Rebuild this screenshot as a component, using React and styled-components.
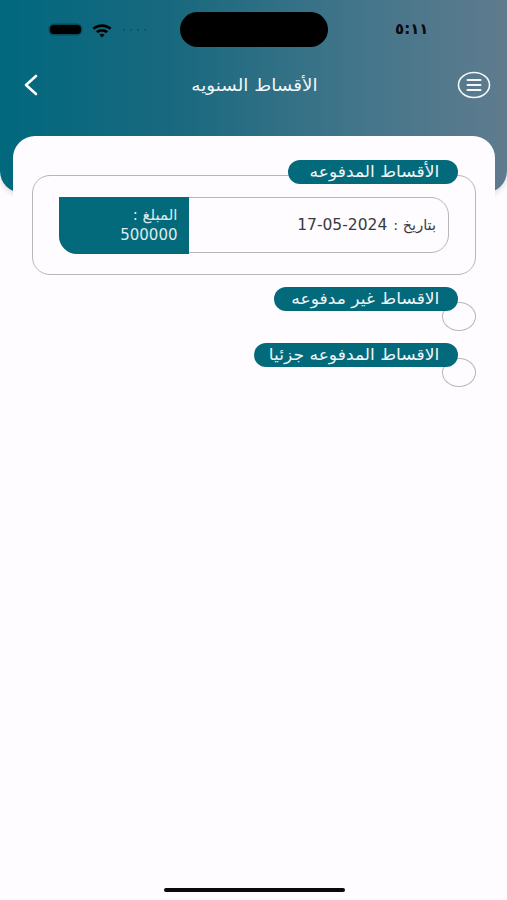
import React from 'react'
import styled, { createGlobalStyle } from 'styled-components'

const teal = '#036a7c'

const GlobalStyle = createGlobalStyle`
    html, body {
        margin: 0;
        padding: 0;
        background-color: #fefcfe;
    }
    body {
        font-family: "DejaVu Sans", "Noto Sans", sans-serif;
    }
`
const Screen = styled.div`
    width: 507px;
    height: 900px;
    overflow: hidden;
    display: flex;
    flex-direction: column;
    position: relative;
    background-color: #fefcfe;
`
const Header = styled.header`
    height: 193px;
    flex-shrink: 0;
    box-sizing: border-box;
    padding-top: 12px;
    background: linear-gradient(90deg, #01687e 0%, #19697f 35%, #42758a 70%, #5f7b8e 100%);
    border-radius: 0 0 22px 22px;
    box-shadow: 0 3px 5px rgba(0, 0, 0, 0.12);
`
const StatusBar = styled.div`
    height: 35px;
    display: grid;
    grid-template-columns: 1fr 148px 1fr;
    align-items: center;
`
const Time = styled.div`
    color: #0a0a12;
    font-size: 15px;
    font-weight: bold;
    text-align: center;
    padding-right: 11px;
    padding-bottom: 1px;
`
const Island = styled.div`
    height: 35px;
    background-color: #000;
    border-radius: 18px;
`
const StatusIcons = styled.div`
    display: flex;
    align-items: center;
    gap: 10px;
    padding-left: 50px;
    direction: ltr;
`
const Battery = styled.div`
    width: 31px;
    height: 9px;
    background-color: #000;
    border-radius: 4px;
    box-shadow: 0 0 0 1.5px rgba(0, 40, 50, 0.45);
`
const Dots = styled.div`
    display: flex;
    gap: 5px;
`
const Dot = styled.span`
    width: 2px;
    height: 2px;
    border-radius: 50%;
    background-color: rgba(10, 50, 60, 0.45);
`
const NavBar = styled.nav`
    height: 30px;
    margin-top: 23px;
    padding: 0 16px 0 22px;
    display: flex;
    align-items: center;
    justify-content: space-between;
`
const NavTitle = styled.h1`
    margin: 0;
    color: #f2f6f8;
    font-size: 17px;
    font-weight: normal;
    transform: translateX(6px) scaleX(1.08);
`
const IconButton = styled.div`
    display: flex;
    align-items: center;
    justify-content: center;
`
const Card = styled.main`
    margin: -57px 12px 0 13px;
    padding: 24px 19px 0 19px;
    height: 700px;
    background-color: #fefcfe;
    border-radius: 22px 22px 0 0;
    display: flex;
    flex-direction: column;
    gap: 12px;
    position: relative;
`
const Section = styled.section`
    position: relative;
    padding-top: 15px;
`
const SectionBox = styled.div`
    box-sizing: border-box;
    border: 1.5px solid #b7b6bb;
    background-color: #fefcfe;
    ${({ $empty }) => $empty
        ? `
        width: 34px;
        height: 29px;
        border-radius: 50%;
        `
        : `
        padding: 21px 26px;
        border-radius: 18px;
        `}
`
const Pill = styled.div`
    position: absolute;
    top: 0;
    right: 18px;
    width: ${({ $width }) => $width}px;
    height: 24px;
    box-sizing: border-box;
    padding: 0 19px 2px 0;
    display: flex;
    align-items: center;
    white-space: nowrap;
    color: #eef5f6;
    font-size: 16px;
    background-color: ${teal};
    border-radius: 12px;
`
const PillText = styled.span`
    display: inline-block;
    transform-origin: right center;
    transform: scaleX(1.07);
`
const Row = styled.div`
    height: 56px;
    box-sizing: border-box;
    border: 1.5px solid #b7b6bb;
    border-radius: 18px;
    display: flex;
    justify-content: space-between;
`
const RowDate = styled.div`
    padding-right: 12px;
    display: flex;
    align-items: center;
    gap: 6px;
    color: #3a3a3d;
    font-size: 14.5px;
`
const DateValue = styled.bdi`
    font-size: 15.5px;
`
const Amount = styled.div`
    width: 130px;
    box-sizing: border-box;
    padding: 8px 11px 0 0;
    margin: -1.5px 0 -1.5px -1.5px;
    color: #dfe9ec;
    font-size: 15px;
    line-height: 20px;
    background-color: ${teal};
    border-radius: 0 0 0 18px;
`
const HomeBar = styled.div`
    position: absolute;
    bottom: 8px;
    left: 164px;
    width: 181px;
    height: 4px;
    border-radius: 2px;
    background-color: #0a0a0a;
`

const sections = [
    { title: 'الأقساط المدفوعه', width: 170, items: [{ date: '17-05-2024', amount: '500000' }] },
    { title: 'الاقساط غير مدفوعه', width: 184, items: [] },
    { title: 'الاقساط المدفوعه جزئيا', width: 204, items: [] },
]

const Wifi = () => (
    <svg width="22" height="16" viewBox="0 0 22 16">
        <path d="M1.5 5.8C6.8.9 15.2.9 20.5 5.8l-1.9 2C14.4 4 7.6 4 3.4 7.8z" fill="#000" />
        <path d="M5 9.3c3.4-3 8.6-3 12 0l-1.9 2c-2.4-2-5.8-2-8.2 0z" fill="#000" />
        <path d="M8.4 12.7c1.5-1.2 3.7-1.2 5.2 0L11 15.4z" fill="#000" />
    </svg>
)

const BackIcon = () => (
    <svg width="18" height="24" viewBox="0 0 18 24" fill="none">
        <path d="M14 3 4 12l10 9" stroke="#fff" strokeWidth="2.6" strokeLinecap="round" strokeLinejoin="round" />
    </svg>
)

const MenuIcon = () => (
    <svg width="34" height="28" viewBox="0 0 34 28" fill="none" stroke="#f4f7f8">
        <ellipse cx="17" cy="14" rx="15.5" ry="12.5" strokeWidth="1.6" />
        <path d="M10.5 9h13M10.5 14h13M10.5 19h13" strokeWidth="2" strokeLinecap="round" />
    </svg>
)

const App = () => {
    return (
        <Screen dir="rtl">
            <GlobalStyle />
            <Header>
                <StatusBar>
                    <Time>٥:١١</Time>
                    <Island />
                    <StatusIcons>
                        <Battery />
                        <Wifi />
                        <Dots>
                            <Dot /><Dot /><Dot /><Dot />
                        </Dots>
                    </StatusIcons>
                </StatusBar>
                <NavBar>
                    <IconButton><MenuIcon /></IconButton>
                    <NavTitle>الأقساط السنويه</NavTitle>
                    <IconButton><BackIcon /></IconButton>
                </NavBar>
            </Header>
            <Card>
                {sections.map((section) => (
                    <Section key={section.title}>
                        <SectionBox $empty={section.items.length === 0}>
                            {section.items.map((item) => (
                                <Row key={item.date}>
                                    <RowDate>
                                        <span>بتاريخ :</span>
                                        <DateValue dir="ltr">{item.date}</DateValue>
                                    </RowDate>
                                    <Amount>المبلغ :<br />{item.amount}</Amount>
                                </Row>
                            ))}
                        </SectionBox>
                        <Pill $width={section.width}>
                            <PillText>{section.title}</PillText>
                        </Pill>
                    </Section>
                ))}
            </Card>
            <HomeBar />
        </Screen>
    )
}

export default App
